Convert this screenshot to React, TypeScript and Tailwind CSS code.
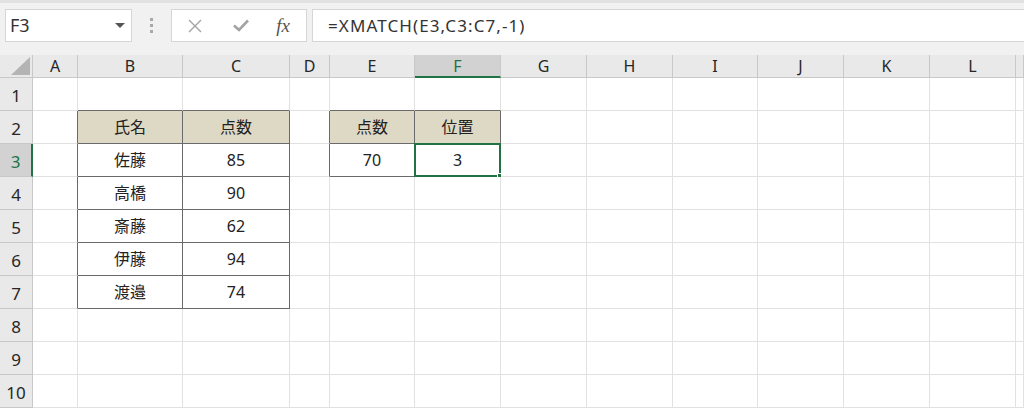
import React from "react";

const COLS = ["A", "B", "C", "D", "E", "F", "G", "H", "I", "J", "K", "L", "M"];
const ROWS = [1, 2, 3, 4, 5, 6, 7, 8, 9, 10];

// cell values, keyed by address
const DATA: Record<string, string> = {
  B2: "氏名",
  C2: "点数",
  B3: "佐藤",
  C3: "85",
  B4: "高橋",
  C4: "90",
  B5: "斎藤",
  C5: "62",
  B6: "伊藤",
  C6: "94",
  B7: "渡邉",
  C7: "74",
  E2: "点数",
  F2: "位置",
  E3: "70",
  F3: "3",
};

const HEADER_CELLS = ["B2", "C2", "E2", "F2"];

function inTable(col: number, row: number) {
  // col index into COLS, row is 1-based
  const b = col === 1 || col === 2;
  const e = col === 4 || col === 5;
  if (b && row >= 2 && row <= 7) return true;
  if (e && row >= 2 && row <= 3) return true;
  return false;
}

function Cell({ col, row }: { col: number; row: number }) {
  const addr = `${COLS[col]}${row}`;
  const value = DATA[addr];
  const darkRight = inTable(col, row) || inTable(col + 1, row);
  const darkBottom = inTable(col, row) || inTable(col, row + 1);
  const isHead = HEADER_CELLS.includes(addr);
  const selected = addr === "F3";

  return (
    <div
      className={`relative flex items-end justify-center pb-[4px] border-r border-b text-[16px] text-[#222] ${
        darkRight ? "border-r-[#6a6a6a]" : "border-r-[#e1e1e1]"
      } ${darkBottom ? "border-b-[#6a6a6a]" : "border-b-[#e1e1e1]"} ${
        isHead ? "bg-[#ddd9c4]" : "bg-white"
      }`}
    >
      {value}
      {selected && (
        <div className="absolute -left-[1px] -top-[1px] -right-[1px] -bottom-[1px] border-2 border-[#217346]">
          <div className="absolute -right-[4px] -bottom-[4px] w-[6px] h-[6px] bg-[#217346] border border-white" />
        </div>
      )}
    </div>
  );
}

function Toolbar() {
  return (
    <div className="h-[55px] bg-[#f1f1f1] border-t-[3px] border-t-[#e2e2e2] flex items-start pt-[6px] pl-[5px]">
      <div className="w-[127px] h-[33px] bg-white border border-[#d6d6d6] flex items-center justify-between pl-[4px] pr-[6px]">
        <span className="text-[18px] text-[#333]">F3</span>
        <svg width="10" height="6" viewBox="0 0 10 6">
          <path d="M0 0 L10 0 L5 5 Z" fill="#555" />
        </svg>
      </div>
      <div className="w-[39px] h-[33px] flex flex-col items-center justify-center gap-[3px]">
        <span className="w-[3px] h-[3px] bg-[#a8a8a8]" />
        <span className="w-[3px] h-[3px] bg-[#a8a8a8]" />
        <span className="w-[3px] h-[3px] bg-[#a8a8a8]" />
      </div>
      <div className="w-[136px] h-[33px] bg-white border border-[#d6d6d6] flex items-center">
        <div className="w-[46px] flex justify-center">
          <svg width="14" height="14" viewBox="0 0 14 14">
            <path d="M1 1 L13 13 M13 1 L1 13" stroke="#a3a3a3" strokeWidth="1.4" />
          </svg>
        </div>
        <div className="w-[46px] flex justify-center">
          <svg width="16" height="13" viewBox="0 0 16 13">
            <path d="M1 6.5 L6 11 L15 1.5" stroke="#a3a3a3" strokeWidth="2.6" fill="none" />
          </svg>
        </div>
        <div className="flex-1 flex justify-center pr-[4px]">
          <span className="text-[19px] italic text-[#555] font-['Liberation_Serif',serif] leading-none">
            fx
          </span>
        </div>
      </div>
      <div className="ml-[5px] flex-1 h-[33px] bg-white border border-[#d6d6d6] border-r-0 flex items-center pl-[15px]">
        <span className="text-[17px] text-[#333] tracking-[1.1px]">=XMATCH(E3,C3:C7,-1)</span>
      </div>
    </div>
  );
}

export default function App() {
  return (
    <div className="w-[1024px] h-[408px] overflow-hidden bg-white font-['Noto_Sans','Noto_Sans_CJK_JP',sans-serif]">
      <Toolbar />
      <div className="grid grid-cols-[33px_45px_105px_107px_40px_85px_86px_86px_86px_85px_86px_86px_86px_1fr] grid-rows-[23px_repeat(10,33px)]">
        <div className="bg-[#e9e9e9] border-r border-b border-[#c8c8c8] flex items-end justify-end pr-[2px] pb-[2px]">
          <svg width="19" height="18" viewBox="0 0 19 18">
            <path d="M19 0 L19 18 L0 18 Z" fill="#b4b4b4" />
          </svg>
        </div>
        {COLS.map((c) =>
          c === "F" ? (
            <div
              key={c}
              className="bg-[#d2d2d2] border-r border-r-[#c8c8c8] border-b-2 border-b-[#217346] flex items-center justify-center text-[16px] text-[#217346]"
            >
              {c}
            </div>
          ) : (
            <div
              key={c}
              className="bg-[#e9e9e9] border-r border-b border-[#c8c8c8] flex items-center justify-center text-[16px] text-[#262626]"
            >
              {/* M is cut off at the window edge, only its column strip shows */}
              {c === "M" ? "" : c}
            </div>
          )
        )}
        {ROWS.map((r) => (
          <React.Fragment key={r}>
            {r === 3 ? (
              <div className="bg-[#d2d2d2] border-r-2 border-r-[#217346] border-b border-b-[#c8c8c8] flex items-end justify-center pb-[2px] text-[17px] text-[#217346]">
                {r}
              </div>
            ) : (
              <div className="bg-[#e9e9e9] border-r border-b border-[#c8c8c8] flex items-end justify-center pb-[2px] text-[17px] text-[#262626]">
                {r}
              </div>
            )}
            {COLS.map((_, ci) => (
              <Cell key={ci} col={ci} row={r} />
            ))}
          </React.Fragment>
        ))}
      </div>
    </div>
  );
}
